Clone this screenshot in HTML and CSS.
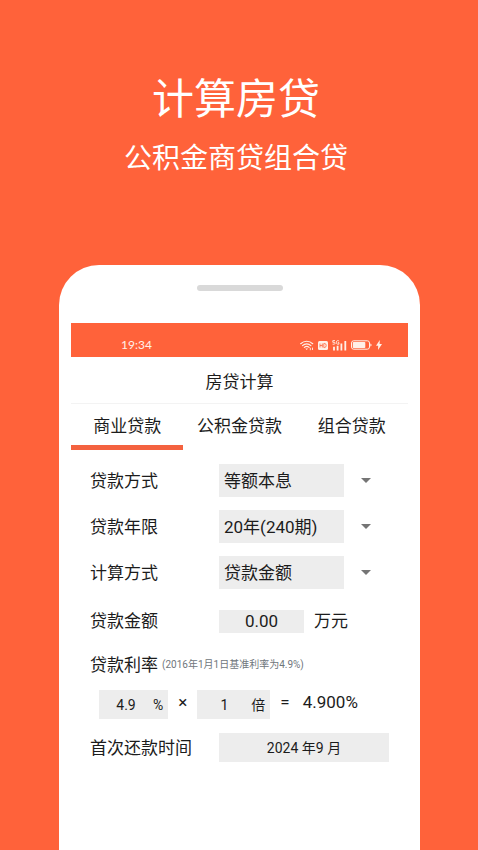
FILE: index.html
```html
<!DOCTYPE html>
<html lang="zh-CN">
<head>
    <meta charset="UTF-8">
    <meta name="viewport" content="width=device-width, initial-scale=1.0">
    <title>房贷计算</title>
    <link rel="stylesheet" href="styles.css">
</head>
<body>
    <header class="header">
        <h1>计算房贷</h1>
        <p>公积金商贷组合贷</p>
    </header>

    <main class="phone">
        <div class="speaker"></div>

        <div class="status-bar">
            <span class="time">19:34</span>
            <div class="status-icons">
                <!-- wifi -->
                <svg width="14" height="11" viewBox="0 0 14 11" fill="none" stroke="currentColor" stroke-width="1.2" stroke-linecap="round">
                    <path d="M0.7 3.7C4.1 0.4 9.3 0.4 12.7 3.7" />
                    <path d="M2.5 5.6C4.9 3.3 8.5 3.3 10.9 5.6" />
                    <path d="M4.3 7.4C5.7 6.1 7.7 6.1 9.1 7.4" />
                    <path d="M5.3 8.5L6.7 10L8.1 8.5Z" fill="currentColor" stroke="none" />
                    <path d="M10.3 8.2V9.8M12.5 8V9.6" stroke-width="0.9" />
                </svg>
                <!-- hd -->
                <svg width="10" height="9" viewBox="0 0 10 9">
                    <rect width="10" height="9" rx="1.5" fill="currentColor" />
                    <path d="M2 2.5V6.5M4.3 2.5V6.5M2 4.5H4.3M5.8 2.5V6.5H6.8Q8.2 6.3 8.2 4.5T6.8 2.5Z" fill="none" stroke="#ff623a" stroke-width="0.8" />
                </svg>
                <!-- 5g signal -->
                <svg width="15" height="11" viewBox="0 0 15 11" fill="none" stroke="currentColor">
                    <path d="M3 0.6H0.8V2.3H2.2Q3.2 2.4 3.1 3.3T2.1 4.2H0.6M7.1 1.1Q6.4 0.5 5.5 0.6Q4.4 0.8 4.4 2.4T5.6 4.2H6.9V2.6H5.8" stroke-width="0.9" />
                    <path d="M2 6.7V10.5M5.6 5.7V10.5M9.4 3.5V10.5M13.3 1V10.5" stroke-width="1.8" />
                </svg>
                <!-- battery -->
                <svg width="21" height="10" viewBox="0 0 21 10">
                    <rect x="0.5" y="0.8" width="18" height="8.4" rx="2.2" fill="none" stroke="currentColor" />
                    <rect x="1.8" y="2" width="12.5" height="6" rx="0.8" fill="currentColor" />
                    <path d="M19.3 3.4Q20.6 3.6 20.6 5T19.3 6.6Z" fill="currentColor" />
                </svg>
                <!-- charging -->
                <svg width="6" height="10" viewBox="0 0 6 10" fill="currentColor">
                    <path d="M3.8 0L0 5.8H2.2L2 10L6 4H3.6Z" />
                </svg>
            </div>
        </div>

        <h2 class="title">房贷计算</h2>

        <nav class="tabs">
            <button type="button" class="tab active">商业贷款</button>
            <button type="button" class="tab">公积金贷款</button>
            <button type="button" class="tab">组合贷款</button>
        </nav>

        <form class="loan-form">
            <div class="row">
                <label for="repay-type">贷款方式</label>
                <select id="repay-type" class="field">
                    <option>等额本息</option>
                    <option>等额本金</option>
                </select>
                <svg class="arrow" width="10" height="5" viewBox="0 0 10 5"><path d="M0 0H10L5 5Z" fill="currentColor" /></svg>
            </div>
            <div class="row">
                <label for="years">贷款年限</label>
                <select id="years" class="field">
                    <option>20年(240期)</option>
                    <option>30年(360期)</option>
                </select>
                <svg class="arrow" width="10" height="5" viewBox="0 0 10 5"><path d="M0 0H10L5 5Z" fill="currentColor" /></svg>
            </div>
            <div class="row">
                <label for="calc-type">计算方式</label>
                <select id="calc-type" class="field">
                    <option>贷款金额</option>
                    <option>房屋总价</option>
                </select>
                <svg class="arrow" width="10" height="5" viewBox="0 0 10 5"><path d="M0 0H10L5 5Z" fill="currentColor" /></svg>
            </div>
            <div class="row amount-row">
                <label for="amount">贷款金额</label>
                <input type="text" id="amount" class="field amount" value="0.00">
                <span>万元</span>
            </div>
            <div class="rate-head">
                <label for="rate">贷款利率</label>
                <small>(2016年1月1日基准利率为4.9%)</small>
            </div>
            <div class="rate-row">
                <div class="field unit-field">
                    <input type="text" id="rate" value="4.9">
                    <span>%</span>
                </div>
                <span>×</span>
                <div class="field unit-field">
                    <input type="text" id="times" value="1" aria-label="倍">
                    <span>倍</span>
                </div>
                <span>=</span>
                <output for="rate times">4.900%</output>
            </div>
            <div class="row">
                <label for="first-date">首次还款时间</label>
                <button type="button" id="first-date" class="field date">2024 年9 月</button>
            </div>
        </form>
    </main>
</body>
</html>
```

FILE: styles.css
```css
:root {
    --primary-color: #ff623a;
    --field-color: #ededed;
    --text-color: #1c1c1c;
}

* {
    margin: 0;
    padding: 0;
    box-sizing: border-box;
}

body {
    display: flex;
    flex-direction: column;
    min-height: 100vh;
    font-family: Roboto, "Noto Sans CJK SC", sans-serif;
    font-size: 17px;
    line-height: 24px;
    background-color: var(--primary-color);
    color: var(--text-color);
}

button,
input,
select {
    font: inherit;
    color: inherit;
    border: none;
    border-radius: 0;
    background: none;
    appearance: none;
}

.header {
    padding: 69px 6px 86px 0;
    text-align: center;
    color: white;
}

.header h1 {
    font-size: 42px;
    font-weight: 400;
    line-height: 62px;
}

.header p {
    margin-top: 8px;
    font-size: 28px;
    line-height: 40px;
}

.phone {
    flex: 1;
    margin: 0 58px 0 59px;
    padding: 20px 12px 0;
    border-radius: 40px 40px 0 0;
    background-color: white;
}

.speaker {
    width: 86px;
    height: 6px;
    margin: 0 auto 32px;
    border-radius: 3px;
    background-color: #d9d9d9;
}

.status-bar {
    display: flex;
    justify-content: space-between;
    align-items: center;
    height: 34px;
    padding: 10px 26px 0 50px;
    background-color: var(--primary-color);
    color: #fff0e8;
}

.time {
    font-family: Lato, sans-serif;
    font-size: 12px;
}

.status-icons {
    display: flex;
    align-items: center;
    gap: 4px;
}

.title {
    padding: 13px 0 9px;
    border-bottom: 1px solid #f3f3f3;
    font-size: 17px;
    font-weight: 400;
    text-align: center;
}

.tabs {
    display: flex;
}

.tab {
    flex: 1;
    padding: 10px 0 7px;
    border-bottom: 5px solid transparent;
}

.tab.active {
    border-bottom-color: #f4623f;
}

.loan-form {
    padding: 14px 19px 0;
}

.row {
    display: flex;
    align-items: center;
    margin-bottom: 13px;
}

.row label {
    width: 129px;
}

.field {
    background-color: var(--field-color);
}

select.field {
    width: 125px;
    height: 33px;
    padding-left: 5px;
}

.arrow {
    margin-left: 17px;
    color: #757575;
}

.amount-row {
    margin: 20px 0;
}

.amount {
    width: 85px;
    height: 23px;
    margin-right: 10px;
    text-align: center;
}

.rate-head {
    display: flex;
    align-items: center;
    gap: 4px;
    margin-bottom: 13px;
}

.rate-head small {
    font-size: 10px;
    color: #6f767c;
}

.rate-row {
    display: flex;
    align-items: flex-start;
    gap: 10px;
    margin: 0 0 14px 9px;
}

.rate-row output {
    margin-left: 3px;
}

.unit-field {
    display: flex;
    align-items: center;
    height: 29px;
    padding-right: 5px;
    font-size: 14px;
}

.unit-field input {
    width: 54px;
    text-align: center;
}

.date {
    flex: 1;
    height: 29px;
    font-size: 14px;
}
```
